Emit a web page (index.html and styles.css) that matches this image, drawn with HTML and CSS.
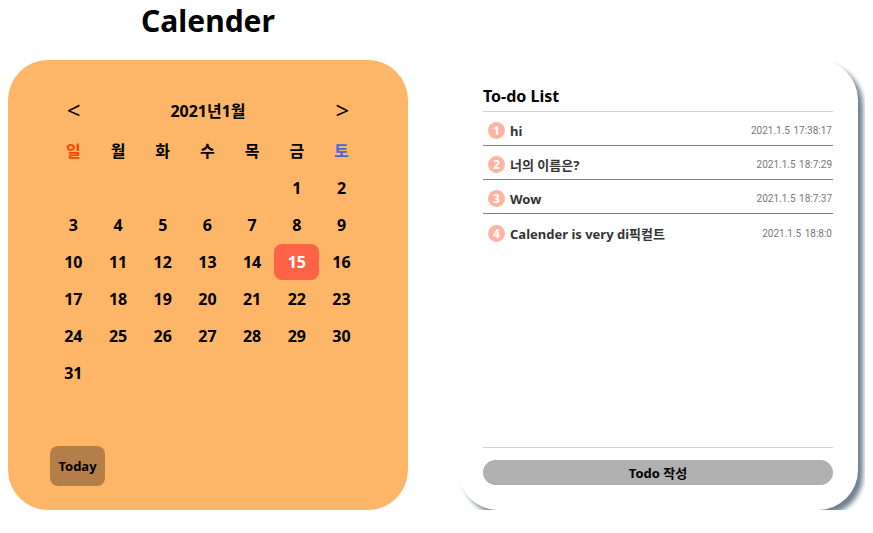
FILE: index.html
```
<!DOCTYPE html>
<html lang="ko">
<head>
<meta charset="utf-8">
<title>Calender</title>
<link rel="stylesheet" href="styles.css">
</head>
<body>
<div class="page">
  <div class="left">
    <h1 class="title">Calender</h1>
    <div class="calendar">
      <div class="cal-head">
        <span class="arrow">&lt;</span>
        <span class="month">2021년1월</span>
        <span class="arrow">&gt;</span>
      </div>
      <div class="grid weekdays">
        <span class="sun">일</span><span>월</span><span>화</span><span>수</span><span>목</span><span>금</span><span class="sat">토</span>
      </div>
      <div class="grid days">
        <span></span><span></span><span></span><span></span><span></span><span>1</span><span>2</span>
        <span>3</span><span>4</span><span>5</span><span>6</span><span>7</span><span>8</span><span>9</span>
        <span>10</span><span>11</span><span>12</span><span>13</span><span>14</span><span class="today">15</span><span>16</span>
        <span>17</span><span>18</span><span>19</span><span>20</span><span>21</span><span>22</span><span>23</span>
        <span>24</span><span>25</span><span>26</span><span>27</span><span>28</span><span>29</span><span>30</span>
        <span>31</span>
      </div>
      <button class="today-btn">Today</button>
    </div>
  </div>
  <div class="card">
    <h2 class="card-title">To-do List</h2>
    <ul class="todo">
      <li><span class="num">1</span><span class="text">hi</span><span class="date">2021.1.5 17:38:17</span></li>
      <li><span class="num">2</span><span class="text">너의 이름은?</span><span class="date">2021.1.5 18:7:29</span></li>
      <li><span class="num">3</span><span class="text">Wow</span><span class="date">2021.1.5 18:7:37</span></li>
      <li><span class="num">4</span><span class="text">Calender is very di픽컬트</span><span class="date">2021.1.5 18:8:0</span></li>
    </ul>
    <button class="write-btn">Todo 작성</button>
  </div>
</div>
</body>
</html>
```
FILE: styles.css
```
* { box-sizing: border-box; }
body {
  margin: 8px;
  font-family: "Noto Sans", "Noto Sans CJK KR", sans-serif;
  color: #000;
  background: #fff;
}
.page {
  display: flex;
  align-items: flex-end;
  gap: 50px;
}
.left {
  width: 400px;
  display: flex;
  flex-direction: column;
}
.title {
  margin: 0;
  height: 52px;
  text-align: center;
  font-size: 30px;
  font-weight: 700;
  line-height: 25px;
}
.calendar {
  height: 450px;
  background: #fdb667;
  border-radius: 40px;
  padding: 36px 43px 24px 43px;
  display: flex;
  flex-direction: column;
}
.cal-head {
  display: flex;
  justify-content: space-between;
  align-items: center;
  height: 28px;
}
.arrow {
  width: 45px;
  text-align: center;
  font-size: 24px;
  font-weight: 400;
  line-height: 28px;
}
.month {
  font-size: 16px;
  font-weight: 700;
}
.grid {
  display: grid;
  grid-template-columns: repeat(7, 44.7px);
}
.weekdays {
  margin-top: 14px;
  height: 24px;
  align-items: center;
}
.weekdays span {
  text-align: center;
  font-size: 16px;
  font-weight: 700;
  line-height: 24px;
  font-family: "Noto Sans CJK KR", sans-serif;
}
.weekdays .sun { color: #ff4500; }
.weekdays .sat { color: #4169e1; }
.days {
  margin-top: 8px;
  grid-auto-rows: 37px;
}
.days span {
  display: flex;
  align-items: center;
  justify-content: center;
  height: 36px;
  font-size: 16px;
  font-weight: 700;
}
.days .today {
  background: #ff6347;
  color: #fff;
  border-radius: 8px;
}
.today-btn {
  margin-top: auto;
  align-self: flex-start;
  margin-left: -1px;
  width: 55px;
  height: 40px;
  border: none;
  border-radius: 8px;
  background: #b47e49;
  color: #000;
  font-family: "Noto Sans", sans-serif;
  font-size: 13px;
  font-weight: 700;
  padding: 0;
}
.card {
  width: 400px;
  height: 450px;
  background: #fff;
  border-radius: 40px;
  box-shadow: 5px 5px 5px #708090;
  padding: 24px 25px 25px 25px;
  display: flex;
  flex-direction: column;
}
.card-title {
  margin: 0;
  font-size: 16px;
  font-weight: 700;
  line-height: 24px;
  height: 28px;
  border-bottom: 1px solid #d0d0d0;
}
.todo {
  list-style: none;
  margin: 0;
  padding: 0;
  flex: 1;
  border-bottom: 1px solid #d0d0d0;
}
.todo li {
  display: flex;
  align-items: center;
  height: 34px;
  padding: 4px 1px 0 5px;
  border-bottom: 1px solid #808080;
}
.todo li:last-child { border-bottom: none; }
.num {
  width: 17px;
  height: 17px;
  border-radius: 50%;
  background: #ffb4a1;
  color: #fff;
  font-size: 12px;
  font-weight: 700;
  display: flex;
  align-items: center;
  justify-content: center;
  margin-right: 5px;
}
.text {
  font-size: 13px;
  font-weight: 700;
  color: #333;
}
.date {
  margin-left: auto;
  font-family: Roboto, "Noto Sans", sans-serif;
  font-size: 10px;
  color: #777;
  word-spacing: 1px;
}
.write-btn {
  margin-top: 12px;
  height: 25px;
  border: none;
  border-radius: 13px;
  background: #b0b0b0;
  color: #000;
  font-family: "Noto Sans", "Noto Sans CJK KR", sans-serif;
  font-size: 13px;
  font-weight: 700;
  padding: 0;
}
```
